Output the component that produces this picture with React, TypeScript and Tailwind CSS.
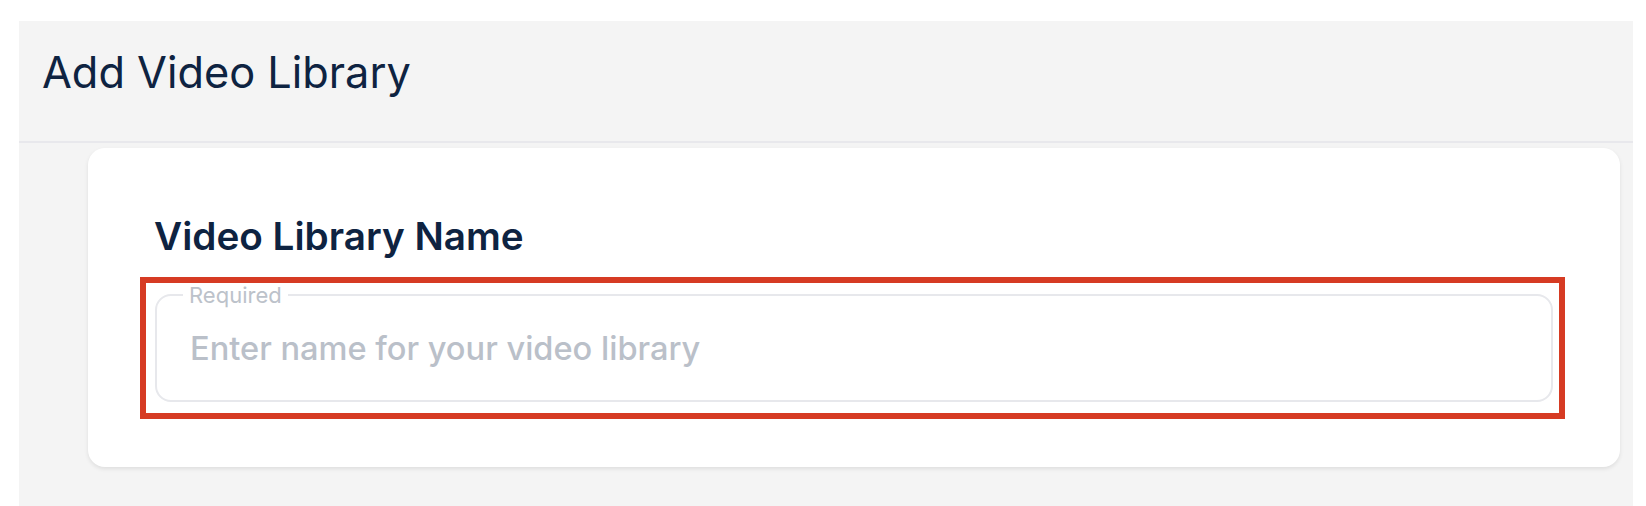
export default function App() {
    return (
        <div className="min-h-screen bg-white pl-[19px] pr-[13px] pt-[21px] font-['Inter',_'Liberation_Sans',_sans-serif]">
            <div className="h-[485px] bg-[#f4f4f4]">
                {/* header */}
                <header className="h-[122px] border-b-2 border-[#e8e8ec] px-[23px] pt-[25px]">
                    <h1 className="text-[43.3px] leading-[53px] font-normal text-[#0e2341]">Add Video Library</h1>
                </header>

                {/* content */}
                <div className="pl-[69px] pr-[13px] pt-[5px]">
                    <div className="rounded-[17px] bg-white pl-[52px] pr-[55px] pt-[64px] pb-[48px] shadow-[0_2px_4px_rgba(0,0,0,0.09)]">
                        <h2 className="ml-[14px] text-[38.7px] leading-[48px] font-semibold text-[#0e2341]">Video Library Name</h2>

                        {/* highlighted field */}
                        <div className="mt-[17px] border-[6px] border-[#d63b23] pt-[11px] pb-[11px] pl-[9px] pr-[6px]">
                            <div className="relative flex h-[108px] items-center rounded-[16px] border-2 border-[#e7e8ec] pl-[33px] pr-4">
                                <span className="absolute -top-[13px] left-[26px] bg-white px-[6px] text-[22px] leading-[24px] text-[#bcc2ca]">
                                    Required
                                </span>
                                <input
                                    type="text"
                                    placeholder="Enter name for your video library"
                                    className="h-[40px] w-full bg-transparent text-[32.6px] leading-[40px] font-medium text-[#0e2341] outline-none placeholder:text-[#bac0c9]"
                                />
                            </div>
                        </div>
                    </div>
                </div>
            </div>
        </div>
    );
}
